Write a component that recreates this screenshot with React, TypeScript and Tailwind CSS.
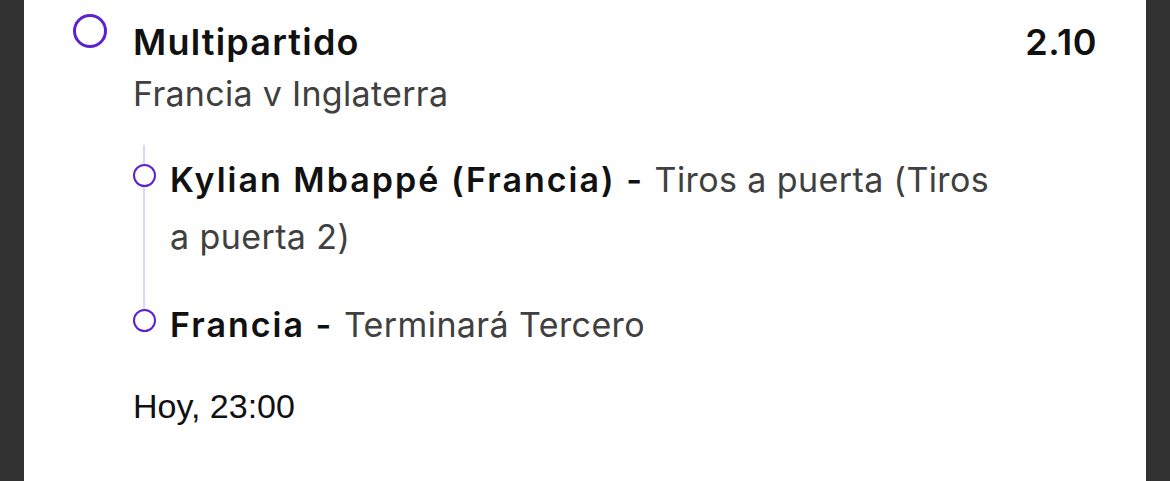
import React from 'react';

interface Selection {
  name: string;
  market: string;
}

const selections: Selection[] = [
  { name: 'Kylian Mbappé (Francia)', market: 'Tiros a puerta (Tiros a puerta 2)' },
  { name: 'Francia', market: 'Terminará Tercero' },
];

function Ring({ size }: { size: 'lg' | 'sm' }) {
  return (
    <span
      className={
        size === 'lg'
          ? 'block w-[34px] h-[34px] shrink-0 rounded-full border-[3px] border-[#5b22d2] bg-white'
          : 'block w-[23px] h-[23px] shrink-0 rounded-full border-2 border-[#5b22d2] bg-white'
      }
    />
  );
}

export default function App() {
  return (
    <div className="flex h-[481px] bg-[#323232] px-6 overflow-hidden">
      <div className="flex-1 bg-white pl-[49px] pr-[49px] pt-[14px] font-['Inter',sans-serif] text-[#111]">
        <div className="flex items-start gap-[26px]">
          <Ring size="lg" />
          <div className="flex-1 pt-[2px]">
            <div className="flex justify-between">
              <h2 className="text-[36px] leading-[52px] font-semibold tracking-[1.2px]">Multipartido</h2>
              <span className="text-[36px] leading-[52px] font-semibold tracking-[0.5px]">2.10</span>
            </div>
            <p className="text-[34px] leading-[52px] text-[#404040] tracking-[0.3px]">Francia v Inglaterra</p>

            <ul className="relative mt-[31px] flex flex-col gap-[31px] max-w-[872px]">
              {/* connector between the leg markers */}
              <span className="absolute left-[10px] top-[-6px] bottom-[44px] w-[2px] bg-[#ddd5f8]" />
              {selections.map((s) => (
                <li key={s.name} className="relative flex items-start gap-[14px]">
                  <span className="pt-[13px]">
                    <Ring size="sm" />
                  </span>
                  <p className="text-[34px] leading-[57px] text-[#404040] tracking-[0.4px]">
                    <span className="font-semibold text-[#111] tracking-[2px]">{s.name} - </span>
                    {s.market}
                  </p>
                </li>
              ))}
            </ul>

            <p className="mt-[33px] font-['Liberation_Sans',sans-serif] text-[34px] leading-[40px] text-[#111]">
              Hoy, 23:00
            </p>
          </div>
        </div>
      </div>
    </div>
  );
}
